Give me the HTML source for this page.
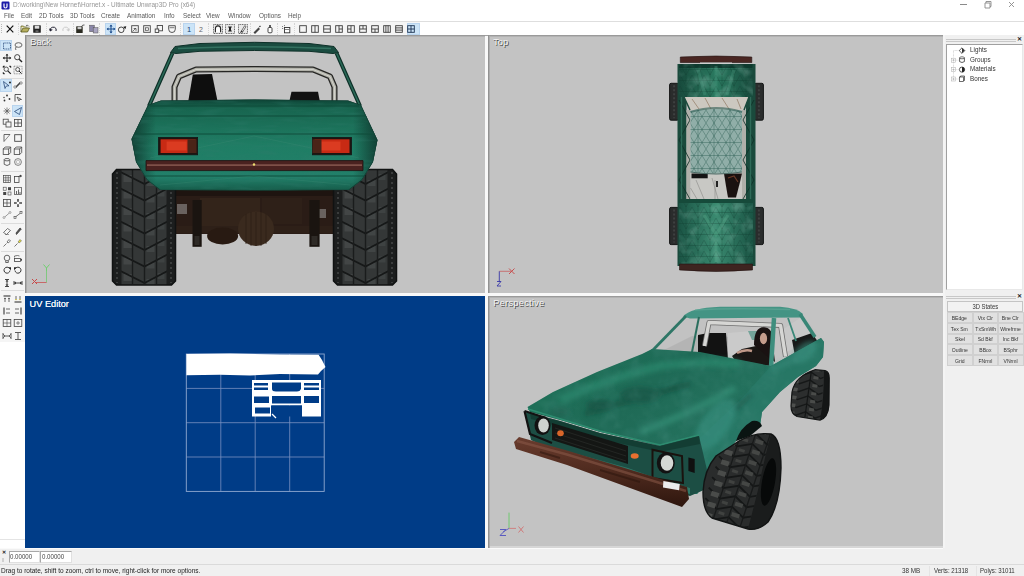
<!DOCTYPE html>
<html><head><meta charset="utf-8">
<style>
*{margin:0;padding:0;box-sizing:border-box}
html,body{width:1024px;height:576px;overflow:hidden;background:#f0f0f0;font-family:"Liberation Sans",sans-serif;position:relative}
.a{position:absolute}
.t{position:absolute;white-space:nowrap}
svg{overflow:visible}
</style></head><body>

<div class="a" style="left:0px;top:0px;width:1024px;height:22px;background:#ffffff;"></div>
<svg class="a" style="left:1px;top:1px;" width="9" height="9" viewBox="0 0 9 9"><rect x="0.5" y="0.5" width="8" height="8" rx="1.2" fill="#1c1ca8"/><path d="M3 2.5v3a1.5 1.5 0 0 0 3 0v-3" stroke="#fff" stroke-width="1.2" fill="none"/></svg>
<div class="t" style="left:12.5px;top:1.2px;font-size:7px;line-height:8.05px;color:#959595;transform:scaleX(0.92);transform-origin:0 0;">D:\working\New Hornet\Hornet.x - Ultimate Unwrap3D Pro (x64)</div>
<svg class="a" style="left:958px;top:0px;" width="66" height="10" viewBox="0 0 66 10"><path d="M2 4.5h7" stroke="#8a8a8a" stroke-width="1"/><path d="M27 3h5v5h-5z M28 3v-1.5h5v5h-1" stroke="#8a8a8a" stroke-width="0.9" fill="none"/><path d="M51 2l5 5M56 2l-5 5" stroke="#8a8a8a" stroke-width="0.9"/></svg>
<div class="t" style="left:4px;top:12.2px;font-size:7.4px;line-height:8.51px;color:#585858;transform:scaleX(0.86);transform-origin:0 0;">File</div>
<div class="t" style="left:21px;top:12.2px;font-size:7.4px;line-height:8.51px;color:#585858;transform:scaleX(0.86);transform-origin:0 0;">Edit</div>
<div class="t" style="left:39px;top:12.2px;font-size:7.4px;line-height:8.51px;color:#585858;transform:scaleX(0.86);transform-origin:0 0;">2D Tools</div>
<div class="t" style="left:69.5px;top:12.2px;font-size:7.4px;line-height:8.51px;color:#585858;transform:scaleX(0.86);transform-origin:0 0;">3D Tools</div>
<div class="t" style="left:100.8px;top:12.2px;font-size:7.4px;line-height:8.51px;color:#585858;transform:scaleX(0.86);transform-origin:0 0;">Create</div>
<div class="t" style="left:126.5px;top:12.2px;font-size:7.4px;line-height:8.51px;color:#585858;transform:scaleX(0.86);transform-origin:0 0;">Animation</div>
<div class="t" style="left:164px;top:12.2px;font-size:7.4px;line-height:8.51px;color:#585858;transform:scaleX(0.86);transform-origin:0 0;">Info</div>
<div class="t" style="left:182.8px;top:12.2px;font-size:7.4px;line-height:8.51px;color:#585858;transform:scaleX(0.86);transform-origin:0 0;">Select</div>
<div class="t" style="left:206px;top:12.2px;font-size:7.4px;line-height:8.51px;color:#585858;transform:scaleX(0.86);transform-origin:0 0;">View</div>
<div class="t" style="left:227.7px;top:12.2px;font-size:7.4px;line-height:8.51px;color:#585858;transform:scaleX(0.86);transform-origin:0 0;">Window</div>
<div class="t" style="left:258.6px;top:12.2px;font-size:7.4px;line-height:8.51px;color:#585858;transform:scaleX(0.86);transform-origin:0 0;">Options</div>
<div class="t" style="left:288px;top:12.2px;font-size:7.4px;line-height:8.51px;color:#585858;transform:scaleX(0.86);transform-origin:0 0;">Help</div>
<div class="a" style="left:0px;top:21px;width:1024px;height:1px;background:#dedede;"></div>
<div class="a" style="left:0px;top:22px;width:420px;height:13px;background:#f5f5f5;"></div>
<div class="a" style="left:420px;top:22px;width:604px;height:13px;background:#ffffff;"></div>
<div class="a" style="left:1px;top:24px;width:1px;height:1px;background:#b8b8b8;"></div>
<div class="a" style="left:1px;top:26px;width:1px;height:1px;background:#b8b8b8;"></div>
<div class="a" style="left:1px;top:28px;width:1px;height:1px;background:#b8b8b8;"></div>
<div class="a" style="left:1px;top:30px;width:1px;height:1px;background:#b8b8b8;"></div>
<div class="a" style="left:1px;top:32px;width:1px;height:1px;background:#b8b8b8;"></div>
<div class="a" style="left:104.8px;top:22.5px;width:11.700000000000003px;height:12.299999999999997px;background:#cce4f7;border:1px solid #b9d4ee"></div>
<div class="a" style="left:183px;top:22.5px;width:11.599999999999994px;height:12.299999999999997px;background:#cce4f7;border:1px solid #b9d4ee"></div>
<div class="a" style="left:407.4px;top:22.5px;width:12.200000000000045px;height:12.299999999999997px;background:#cce4f7;border:1px solid #b9d4ee"></div>
<div class="a" style="left:17.7px;top:22.5px;width:1px;height:12px;border-left:1px dotted #d4d4d4"></div>
<div class="a" style="left:45.5px;top:22.5px;width:1px;height:12px;border-left:1px dotted #d4d4d4"></div>
<div class="a" style="left:72.5px;top:22.5px;width:1px;height:12px;border-left:1px dotted #d4d4d4"></div>
<div class="a" style="left:99.4px;top:22.5px;width:1px;height:12px;border-left:1px dotted #d4d4d4"></div>
<div class="a" style="left:180px;top:22.5px;width:1px;height:12px;border-left:1px dotted #d4d4d4"></div>
<div class="a" style="left:207.5px;top:22.5px;width:1px;height:12px;border-left:1px dotted #d4d4d4"></div>
<div class="a" style="left:250.3px;top:22.5px;width:1px;height:12px;border-left:1px dotted #d4d4d4"></div>
<div class="a" style="left:277.3px;top:22.5px;width:1px;height:12px;border-left:1px dotted #d4d4d4"></div>
<div class="a" style="left:294px;top:22.5px;width:1px;height:12px;border-left:1px dotted #d4d4d4"></div>
<svg class="a" style="left:4.5px;top:23.5px;" width="10" height="10" viewBox="0 0 10 10"><g transform="translate(5 5)"><path d="M-3.3 -3.3L3.3 3.3M3.3 -3.3L-3.3 3.3" stroke="#111" stroke-width="1.2"/></g></svg>
<svg class="a" style="left:20px;top:23.5px;" width="10" height="10" viewBox="0 0 10 10"><g transform="translate(5 5)"><path d="M-4 -1.5v4.5h6.5l2-4h-6.5l-2 4" fill="#b8b060" stroke="#5a5a20" stroke-width="0.8"/><path d="M-4 -1.5v-1.5h2.5l1 1h3" stroke="#5a5a20" fill="#d8d080" stroke-width="0.7"/><path d="M1 -3.5q2 -1 3 1" stroke="#333" stroke-width="0.7" fill="none"/></g></svg>
<svg class="a" style="left:32px;top:23.5px;" width="10" height="10" viewBox="0 0 10 10"><g transform="translate(5 5)"><rect x="-3.8" y="-3.8" width="7.6" height="7.6" rx="0.6" fill="#222"/><rect x="-2.3" y="-3.3" width="4.6" height="3" fill="#ddd"/><rect x="-1.5" y="1.3" width="3" height="2" fill="#666"/></g></svg>
<svg class="a" style="left:47.5px;top:23.5px;" width="10" height="10" viewBox="0 0 10 10"><g transform="translate(5 5)"><path d="M-3 1.5q0.5 -4 4.5 -3.2q2.5 1 1.5 3.7" stroke="#223" stroke-width="1" fill="none"/><path d="M-4 -0.5l1.2 3l2.6 -1.8z" fill="#223"/></g></svg>
<svg class="a" style="left:60.5px;top:23.5px;" width="10" height="10" viewBox="0 0 10 10"><g transform="translate(5 5)"><path d="M3 1.5q-0.5 -4 -4.5 -3.2q-2.5 1 -1.5 3.7" stroke="#ccc" stroke-width="1" fill="none"/><path d="M4 -0.5l-1.2 3l-2.6 -1.8z" fill="#ccc"/></g></svg>
<svg class="a" style="left:75px;top:23.5px;" width="10" height="10" viewBox="0 0 10 10"><g transform="translate(5 5)"><rect x="-3.8" y="-2.8" width="6.5" height="6.8" rx="0.6" fill="#2a2a20"/><rect x="-2.5" y="-2.3" width="4" height="2.5" fill="#ccc"/><path d="M1.5 -2.5q1 -2 3 -1.5" stroke="#333" stroke-width="0.8" fill="none"/></g></svg>
<svg class="a" style="left:88.5px;top:23.5px;" width="10" height="10" viewBox="0 0 10 10"><g transform="translate(5 5)"><rect x="-4.3" y="-3.8" width="4.6" height="6.5" fill="#8a86a8" stroke="#555" stroke-width="0.5"/><rect x="-0.8" y="-1.3" width="4.8" height="5.3" fill="#a8a4c0" stroke="#555" stroke-width="0.5"/></g></svg>
<svg class="a" style="left:105.6px;top:23.5px;" width="10" height="10" viewBox="0 0 10 10"><g transform="translate(5 5)"><path d="M0 -4v8M-4 0h8" stroke="#205090" stroke-width="1.1"/><path d="M0 -4.5l-1.6 2h3.2zM0 4.5l-1.6 -2h3.2zM-4.5 0l2 -1.6v3.2zM4.5 0l-2 -1.6v3.2z" fill="#205090"/></g></svg>
<svg class="a" style="left:117px;top:23.5px;" width="10" height="10" viewBox="0 0 10 10"><g transform="translate(5 5)"><circle cx="-0.8" cy="0.8" r="2.8" stroke="#333" stroke-width="0.9" fill="none"/><path d="M1.3 -2.2l3 -0.5l-1 3z" fill="#111"/></g></svg>
<svg class="a" style="left:129.5px;top:23.5px;" width="10" height="10" viewBox="0 0 10 10"><g transform="translate(5 5)"><rect x="-3.3" y="-3.3" width="6.6" height="6.6" stroke="#444" stroke-width="0.9" fill="none"/><path d="M-1.3 -0.5h2.3v2.3" stroke="#444" stroke-width="0.8" fill="none"/><path d="M-2.5 2.5l3 -3" stroke="#444" stroke-width="0.7"/></g></svg>
<svg class="a" style="left:141.8px;top:23.5px;" width="10" height="10" viewBox="0 0 10 10"><g transform="translate(5 5)"><rect x="-3.3" y="-3.3" width="6.6" height="6.6" stroke="#444" stroke-width="0.9" fill="none"/><rect x="-1.5" y="-1.2" width="3" height="2.5" stroke="#444" stroke-width="0.7" fill="none"/></g></svg>
<svg class="a" style="left:154px;top:23.5px;" width="10" height="10" viewBox="0 0 10 10"><g transform="translate(5 5)"><rect x="-1.8" y="-3.5" width="5.3" height="5.3" stroke="#444" stroke-width="0.9" fill="none"/><rect x="-3.8" y="0" width="3.5" height="3.5" stroke="#444" stroke-width="0.9" fill="#f5f5f5"/></g></svg>
<svg class="a" style="left:166.7px;top:23.5px;" width="10" height="10" viewBox="0 0 10 10"><g transform="translate(5 5)"><path d="M-3.3 -3.3h6.6v3.5q0 3.3 -3.3 3.3q-3.3 0 -3.3 -3.3z" stroke="#444" stroke-width="0.9" fill="none"/><path d="M-2.3 -1.3h4.6" stroke="#444" stroke-width="0.7"/></g></svg>
<svg class="a" style="left:184px;top:23.5px;" width="10" height="10" viewBox="0 0 10 10"><g transform="translate(5 5)"><text x="0" y="2.8" font-size="7.5" text-anchor="middle" fill="#1a3a6a" font-family="Liberation Sans">1</text></g></svg>
<svg class="a" style="left:195.5px;top:23.5px;" width="10" height="10" viewBox="0 0 10 10"><g transform="translate(5 5)"><text x="0" y="2.6" font-size="7" text-anchor="middle" fill="#666" font-family="Liberation Sans">2</text></g></svg>
<svg class="a" style="left:212.5px;top:23.5px;" width="10" height="10" viewBox="0 0 10 10"><g transform="translate(5 5)"><rect x="-4.5" y="-4.5" width="9" height="9" fill="#e8e8e8"/><rect x="-4.5" y="-4.5" width="9" height="9" stroke="#555" stroke-width="0.9" stroke-dasharray="1 0.7" fill="none"/><path d="M-2.6 3.2v-3.5q0 -2.8 2.6 -2.8q2.6 0 2.6 2.8v3.5" stroke="#222" stroke-width="1.1" fill="#fff"/><circle cx="-0.3" cy="1.3" r="1" fill="#fff"/></g></svg>
<svg class="a" style="left:225px;top:23.5px;" width="10" height="10" viewBox="0 0 10 10"><g transform="translate(5 5)"><rect x="-4.5" y="-4.5" width="9" height="9" fill="#e8e8e8"/><rect x="-4.5" y="-4.5" width="9" height="9" stroke="#555" stroke-width="0.9" stroke-dasharray="1 0.7" fill="none"/><path d="M-1.8 -2h3.6M-1.8 2h3.6" stroke="#222" stroke-width="1"/><path d="M-1 -2h2v4h-2z" fill="#222"/></g></svg>
<svg class="a" style="left:237.5px;top:23.5px;" width="10" height="10" viewBox="0 0 10 10"><g transform="translate(5 5)"><rect x="-4.5" y="-4.5" width="9" height="9" fill="#e8e8e8"/><rect x="-4.5" y="-4.5" width="9" height="9" stroke="#555" stroke-width="0.9" stroke-dasharray="1 0.7" fill="none"/><path d="M-2.5 3.5l4.2 -6.8l1.3 0.8l-4.2 6.8z" fill="#fff" stroke="#333" stroke-width="0.7"/><path d="M-2.5 3.5l1.2 -2l1.3 0.8z" fill="#111"/></g></svg>
<svg class="a" style="left:252.39999999999998px;top:23.5px;" width="10" height="10" viewBox="0 0 10 10"><g transform="translate(5 5)"><path d="M-3.5 3.5l5 -5l1.5 1.5l-5 5z" fill="#444"/><path d="M1.5 -1.5l1.5 -2l1 1z" fill="#222"/></g></svg>
<svg class="a" style="left:264.7px;top:23.5px;" width="10" height="10" viewBox="0 0 10 10"><g transform="translate(5 5)"><rect x="-0.8" y="-4" width="1.6" height="2.5" fill="#333"/><rect x="-2" y="-1.5" width="4" height="5.3" rx="1" fill="#fff" stroke="#333" stroke-width="0.9"/></g></svg>
<svg class="a" style="left:281px;top:23.5px;" width="10" height="10" viewBox="0 0 10 10"><g transform="translate(5 5)"><path d="M-4 -3l1 1M-1.5 -4v1.2M-4 -0.5h1.2" stroke="#333" stroke-width="0.6"/><rect x="-1.5" y="-1.5" width="5.3" height="5.3" stroke="#333" stroke-width="0.9" fill="#fff"/><path d="M-1 0.5h4" stroke="#333" stroke-width="0.6"/></g></svg>
<svg class="a" style="left:297.5px;top:23.5px;" width="10" height="10" viewBox="0 0 10 10"><g transform="translate(5 5)"><rect x="-3.3" y="-3.3" width="6.6" height="6.6" stroke="#3a3a3a" stroke-width="0.9" fill="none"/></g></svg>
<svg class="a" style="left:309.6px;top:23.5px;" width="10" height="10" viewBox="0 0 10 10"><g transform="translate(5 5)"><rect x="-3.3" y="-3.3" width="6.6" height="6.6" stroke="#3a3a3a" stroke-width="0.9" fill="none"/><path d="M0 -3.3v6.6" stroke="#3a3a3a" stroke-width="0.9"/></g></svg>
<svg class="a" style="left:321.7px;top:23.5px;" width="10" height="10" viewBox="0 0 10 10"><g transform="translate(5 5)"><rect x="-3.3" y="-3.3" width="6.6" height="6.6" stroke="#3a3a3a" stroke-width="0.9" fill="none"/><path d="M-3.3 0h6.6" stroke="#3a3a3a" stroke-width="0.9"/></g></svg>
<svg class="a" style="left:333.8px;top:23.5px;" width="10" height="10" viewBox="0 0 10 10"><g transform="translate(5 5)"><rect x="-3.3" y="-3.3" width="6.6" height="6.6" stroke="#3a3a3a" stroke-width="0.9" fill="none"/><path d="M0 -3.3v6.6M0 0h3.3" stroke="#3a3a3a" stroke-width="0.9"/></g></svg>
<svg class="a" style="left:345.9px;top:23.5px;" width="10" height="10" viewBox="0 0 10 10"><g transform="translate(5 5)"><rect x="-3.3" y="-3.3" width="6.6" height="6.6" stroke="#3a3a3a" stroke-width="0.9" fill="none"/><path d="M0 -3.3v6.6M0 0h-3.3" stroke="#3a3a3a" stroke-width="0.9"/></g></svg>
<svg class="a" style="left:358.0px;top:23.5px;" width="10" height="10" viewBox="0 0 10 10"><g transform="translate(5 5)"><rect x="-3.3" y="-3.3" width="6.6" height="6.6" stroke="#3a3a3a" stroke-width="0.9" fill="none"/><path d="M-3.3 0h6.6M0 -3.3v3.3" stroke="#3a3a3a" stroke-width="0.9"/></g></svg>
<svg class="a" style="left:370.1px;top:23.5px;" width="10" height="10" viewBox="0 0 10 10"><g transform="translate(5 5)"><rect x="-3.3" y="-3.3" width="6.6" height="6.6" stroke="#3a3a3a" stroke-width="0.9" fill="none"/><path d="M-3.3 0h6.6M0 0v3.3" stroke="#3a3a3a" stroke-width="0.9"/></g></svg>
<svg class="a" style="left:382.2px;top:23.5px;" width="10" height="10" viewBox="0 0 10 10"><g transform="translate(5 5)"><rect x="-3.3" y="-3.3" width="6.6" height="6.6" stroke="#3a3a3a" stroke-width="0.9" fill="none"/><path d="M-1.1 -3.3v6.6M1.1 -3.3v6.6" stroke="#3a3a3a" stroke-width="0.9"/></g></svg>
<svg class="a" style="left:394.3px;top:23.5px;" width="10" height="10" viewBox="0 0 10 10"><g transform="translate(5 5)"><rect x="-3.3" y="-3.3" width="6.6" height="6.6" stroke="#3a3a3a" stroke-width="0.9" fill="none"/><path d="M-3.3 -1.1h6.6M-3.3 1.1h6.6" stroke="#3a3a3a" stroke-width="0.9"/></g></svg>
<svg class="a" style="left:406.4px;top:23.5px;" width="10" height="10" viewBox="0 0 10 10"><g transform="translate(5 5)"><rect x="-3.3" y="-3.3" width="6.6" height="6.6" stroke="#1a3050" stroke-width="0.9" fill="none"/><path d="M0 -3.3v6.6M-3.3 0h6.6" stroke="#1a3050" stroke-width="0.9"/></g></svg>
<div class="a" style="left:0px;top:35px;width:25px;height:307px;background:#f5f5f5;"></div>
<div class="a" style="left:0px;top:342px;width:25px;height:206px;background:#ffffff;"></div>
<div class="a" style="left:0px;top:539px;width:25px;height:1px;background:#e4e4e4;"></div>
<div class="a" style="left:1px;top:77.7px;width:23px;height:1px;background:#dcdcdc;"></div>
<div class="a" style="left:1px;top:130.4px;width:23px;height:1px;background:#dcdcdc;"></div>
<div class="a" style="left:1px;top:170.6px;width:23px;height:1px;background:#dcdcdc;"></div>
<div class="a" style="left:1px;top:223px;width:23px;height:1px;background:#dcdcdc;"></div>
<div class="a" style="left:1px;top:251px;width:23px;height:1px;background:#dcdcdc;"></div>
<div class="a" style="left:1px;top:290.4px;width:23px;height:1px;background:#dcdcdc;"></div>
<div class="a" style="left:0px;top:39.9px;width:12.2px;height:11.300000000000004px;background:#cce4f7;border:1px solid #b9d4ee"></div>
<div class="a" style="left:0px;top:79.3px;width:12.2px;height:12.299999999999997px;background:#cce4f7;border:1px solid #b9d4ee"></div>
<div class="a" style="left:12.2px;top:104.5px;width:11.3px;height:12.0px;background:#cce4f7;border:1px solid #b9d4ee"></div>
<svg class="a" style="left:1.5px;top:40.5px;" width="10" height="10" viewBox="0 0 10 10"><g transform="translate(5 5)"><rect x="-3.5" y="-3" width="7" height="6" stroke="#2a4a7a" stroke-width="0.8" stroke-dasharray="1.2 0.6" fill="none"/></g></svg>
<svg class="a" style="left:13px;top:40.5px;" width="10" height="10" viewBox="0 0 10 10"><g transform="translate(5 5)"><ellipse cx="0.5" cy="-1" rx="3.5" ry="2.3" stroke="#444" stroke-width="0.8" fill="none"/><path d="M-2 1q-1 2 0 3" stroke="#444" stroke-width="0.8" fill="none"/></g></svg>
<svg class="a" style="left:1.5px;top:52.7px;" width="10" height="10" viewBox="0 0 10 10"><g transform="translate(5 5)"><path d="M0 -3.8v7.6M-3.8 0h7.6" stroke="#222" stroke-width="1"/><path d="M0 -4.3l-1.4 1.8h2.8zM0 4.3l-1.4 -1.8h2.8zM-4.3 0l1.8 -1.4v2.8zM4.3 0l-1.8 -1.4v2.8z" fill="#222"/></g></svg>
<svg class="a" style="left:13px;top:52.7px;" width="10" height="10" viewBox="0 0 10 10"><g transform="translate(5 5)"><circle cx="-0.8" cy="-0.8" r="2.6" stroke="#333" stroke-width="0.9" fill="none"/><path d="M1.2 1.2l2.8 2.8" stroke="#222" stroke-width="1.4"/></g></svg>
<svg class="a" style="left:1.5px;top:65.4px;" width="10" height="10" viewBox="0 0 10 10"><g transform="translate(5 5)"><circle cx="-0.8" cy="-0.8" r="2.2" stroke="#333" stroke-width="0.8" fill="none"/><path d="M0.8 0.8l3 3" stroke="#222" stroke-width="1.2"/><path d="M-4 -2v-2h2M4 -2v-2h-2M-4 2v2h2" stroke="#555" stroke-width="0.5"/></g></svg>
<svg class="a" style="left:13px;top:65.4px;" width="10" height="10" viewBox="0 0 10 10"><g transform="translate(5 5)"><rect x="-4" y="-3.8" width="8" height="7.6" stroke="#555" stroke-width="0.6" stroke-dasharray="1 0.6" fill="none"/><circle cx="-0.3" cy="-0.5" r="2" stroke="#333" stroke-width="0.8" fill="none"/><path d="M1 1l2.5 2.5" stroke="#222" stroke-width="1"/></g></svg>
<svg class="a" style="left:1.5px;top:80.4px;" width="10" height="10" viewBox="0 0 10 10"><g transform="translate(5 5)"><path d="M-3.5 -3.5l1.5 7l1.3 -2.5l2.7 -0.2z" stroke="#2a4a7a" stroke-width="0.8" fill="none"/><circle cx="3" cy="-2.5" r="1" fill="#222"/></g></svg>
<svg class="a" style="left:13px;top:80.4px;" width="10" height="10" viewBox="0 0 10 10"><g transform="translate(5 5)"><path d="M-2.5 2.5l5 -5" stroke="#444" stroke-width="1.6"/><circle cx="-3" cy="2" r="1.2" stroke="#444" stroke-width="0.6" fill="#fff"/><circle cx="3" cy="-2" r="1.2" stroke="#444" stroke-width="0.6" fill="#fff"/></g></svg>
<svg class="a" style="left:1.5px;top:92.5px;" width="10" height="10" viewBox="0 0 10 10"><g transform="translate(5 5)"><circle cx="-2.5" cy="2.5" r="0.9" fill="#333"/><circle cx="0" cy="-2.5" r="0.9" fill="#333"/><circle cx="2.5" cy="1" r="0.9" fill="#333"/><circle cx="-3" cy="-0.5" r="0.7" fill="#333"/></g></svg>
<svg class="a" style="left:13px;top:92.5px;" width="10" height="10" viewBox="0 0 10 10"><g transform="translate(5 5)"><path d="M-3 -3.5v7M-3 -3.5h6" stroke="#333" stroke-width="0.8"/><path d="M-1 -1l2 4l0.7 -1.5l1.8 0z" stroke="#333" stroke-width="0.7" fill="none"/></g></svg>
<svg class="a" style="left:1.5px;top:105.5px;" width="10" height="10" viewBox="0 0 10 10"><g transform="translate(5 5)"><path d="M0 -3.5v7M-3.5 0h7M-2.5 -2.5l5 5M2.5 -2.5l-5 5" stroke="#555" stroke-width="0.7"/></g></svg>
<svg class="a" style="left:13px;top:105.5px;" width="10" height="10" viewBox="0 0 10 10"><g transform="translate(5 5)"><path d="M3.5 -3.5l-7 4l5 3z" stroke="#2a4a7a" stroke-width="0.8" fill="none"/></g></svg>
<svg class="a" style="left:1.5px;top:117.7px;" width="10" height="10" viewBox="0 0 10 10"><g transform="translate(5 5)"><rect x="-3.8" y="-3.8" width="5" height="5" stroke="#444" stroke-width="0.8" fill="none"/><rect x="-1" y="-1" width="5" height="5" stroke="#444" stroke-width="0.8" fill="#f5f5f5"/></g></svg>
<svg class="a" style="left:13px;top:117.7px;" width="10" height="10" viewBox="0 0 10 10"><g transform="translate(5 5)"><rect x="-3.5" y="-3.5" width="7" height="7" stroke="#444" stroke-width="0.8" fill="none"/><path d="M0 -3.5v7M-3.5 0h7" stroke="#444" stroke-width="0.8"/></g></svg>
<svg class="a" style="left:1.5px;top:133px;" width="10" height="10" viewBox="0 0 10 10"><g transform="translate(5 5)"><path d="M-3 3.5v-7l6 0" stroke="#444" stroke-width="0.8" fill="none"/><path d="M-3 3.5l6 -7" stroke="#444" stroke-width="0.6"/></g></svg>
<svg class="a" style="left:13px;top:133px;" width="10" height="10" viewBox="0 0 10 10"><g transform="translate(5 5)"><rect x="-3.3" y="-3.3" width="6.6" height="6.6" stroke="#444" stroke-width="0.9" fill="none"/></g></svg>
<svg class="a" style="left:1.5px;top:146px;" width="10" height="10" viewBox="0 0 10 10"><g transform="translate(5 5)"><rect x="-3.8" y="-2" width="5.5" height="5.5" stroke="#444" stroke-width="0.8" fill="none"/><path d="M-3.8 -2l2 -2h5.5v5.5l-2 2M1.7 -2l2 -2" stroke="#444" stroke-width="0.8" fill="none"/></g></svg>
<svg class="a" style="left:13px;top:146px;" width="10" height="10" viewBox="0 0 10 10"><g transform="translate(5 5)"><rect x="-3.8" y="-2" width="5.5" height="5.5" stroke="#444" stroke-width="0.8" fill="none"/><path d="M-3.8 -2l2 -2h5.5v5.5l-2 2M1.7 -2l2 -2" stroke="#444" stroke-width="0.8" fill="none"/></g></svg>
<svg class="a" style="left:1.5px;top:157.4px;" width="10" height="10" viewBox="0 0 10 10"><g transform="translate(5 5)"><ellipse cx="0" cy="-2.3" rx="2.8" ry="1.2" stroke="#444" stroke-width="0.8" fill="none"/><path d="M-2.8 -2.3v4.6q2.8 2.4 5.6 0v-4.6" stroke="#444" stroke-width="0.8" fill="none"/></g></svg>
<svg class="a" style="left:13px;top:157.4px;" width="10" height="10" viewBox="0 0 10 10"><g transform="translate(5 5)"><circle cx="0" cy="0" r="3.4" stroke="#666" stroke-width="0.8" fill="none"/><circle cx="0" cy="0" r="1.8" stroke="#999" stroke-width="0.6" fill="none"/></g></svg>
<svg class="a" style="left:1.5px;top:174px;" width="10" height="10" viewBox="0 0 10 10"><g transform="translate(5 5)"><rect x="-3.5" y="-3.5" width="7" height="7" stroke="#444" stroke-width="0.7" fill="none"/><path d="M-1.2 -3.5v7M1.2 -3.5v7M-3.5 -1.2h7M-3.5 1.2h7" stroke="#444" stroke-width="0.6"/></g></svg>
<svg class="a" style="left:13px;top:174px;" width="10" height="10" viewBox="0 0 10 10"><g transform="translate(5 5)"><rect x="-3.5" y="-2.5" width="4.5" height="6" stroke="#444" stroke-width="0.8" fill="none"/><path d="M0 -2.5l2.5 -1.5v-0.5l1.5 1.5l-1.5 1.5v-0.7z" fill="#333"/></g></svg>
<svg class="a" style="left:1.5px;top:186px;" width="10" height="10" viewBox="0 0 10 10"><g transform="translate(5 5)"><rect x="-3.8" y="-3.8" width="3" height="3" stroke="#444" stroke-width="0.6" fill="none"/><rect x="1" y="-3.8" width="3" height="3" fill="#444"/><rect x="-3.8" y="1" width="3" height="3" fill="#444"/><rect x="1" y="1" width="3" height="3" stroke="#444" stroke-width="0.6" fill="none"/></g></svg>
<svg class="a" style="left:13px;top:186px;" width="10" height="10" viewBox="0 0 10 10"><g transform="translate(5 5)"><rect x="-3.5" y="-3.5" width="7" height="7" stroke="#444" stroke-width="0.7" fill="none"/><path d="M-1.5 3v-3M0.5 3v-4.5M2 3v-2" stroke="#444" stroke-width="0.8"/></g></svg>
<svg class="a" style="left:1.5px;top:198.3px;" width="10" height="10" viewBox="0 0 10 10"><g transform="translate(5 5)"><rect x="-3.5" y="-3.5" width="7" height="7" stroke="#444" stroke-width="0.8" fill="none"/><path d="M0 -3.5v7M-3.5 0h7" stroke="#444" stroke-width="0.7"/></g></svg>
<svg class="a" style="left:13px;top:198.3px;" width="10" height="10" viewBox="0 0 10 10"><g transform="translate(5 5)"><path d="M0 -4v8M-4 0h8" stroke="#444" stroke-width="1.6"/><path d="M-1.2 -1.2h2.4v2.4h-2.4z" fill="#fff"/></g></svg>
<svg class="a" style="left:1.5px;top:210.4px;" width="10" height="10" viewBox="0 0 10 10"><g transform="translate(5 5)"><circle cx="-3" cy="2.5" r="1" stroke="#777" stroke-width="0.6" fill="none"/><circle cx="3" cy="-2.5" r="1" stroke="#777" stroke-width="0.6" fill="none"/><path d="M-2 1.8l4 -3.5" stroke="#777" stroke-width="0.7"/></g></svg>
<svg class="a" style="left:13px;top:210.4px;" width="10" height="10" viewBox="0 0 10 10"><g transform="translate(5 5)"><rect x="-4" y="1.5" width="2" height="2" stroke="#444" stroke-width="0.6" fill="none"/><rect x="2" y="-3.5" width="2" height="2" stroke="#444" stroke-width="0.6" fill="none"/><path d="M-2 1.5l4 -3" stroke="#444" stroke-width="0.7"/></g></svg>
<svg class="a" style="left:1.5px;top:225.8px;" width="10" height="10" viewBox="0 0 10 10"><g transform="translate(5 5)"><path d="M-3.5 1.5l4 -4l3 2l-4 4z" stroke="#444" stroke-width="0.7" fill="none"/><path d="M-2 3.5h4" stroke="#444" stroke-width="0.5"/></g></svg>
<svg class="a" style="left:13px;top:225.8px;" width="10" height="10" viewBox="0 0 10 10"><g transform="translate(5 5)"><path d="M-1.5 3.5l-0.5 -1.5l4 -5l1.3 1z" stroke="#333" stroke-width="0.7" fill="#555"/></g></svg>
<svg class="a" style="left:1.5px;top:237.6px;" width="10" height="10" viewBox="0 0 10 10"><g transform="translate(5 5)"><path d="M-3.5 3.5l3 -3" stroke="#444" stroke-width="0.7"/><path d="M0 -1l2 -2.5l1.5 1.5l-2.5 2z" stroke="#444" stroke-width="0.7" fill="#fff"/></g></svg>
<svg class="a" style="left:13px;top:237.6px;" width="10" height="10" viewBox="0 0 10 10"><g transform="translate(5 5)"><path d="M-3.5 3.5l3 -3" stroke="#444" stroke-width="0.7"/><path d="M0 -1l2 -2.5l1.5 1.5l-2.5 2z" stroke="#666" stroke-width="0.6" fill="#e8e030"/></g></svg>
<svg class="a" style="left:1.5px;top:253.60000000000002px;" width="10" height="10" viewBox="0 0 10 10"><g transform="translate(5 5)"><circle cx="0" cy="-1" r="2.8" stroke="#444" stroke-width="0.8" fill="none"/><path d="M-1.3 2v1.5h2.6v-1.5" stroke="#444" stroke-width="0.8" fill="none"/></g></svg>
<svg class="a" style="left:13px;top:253.60000000000002px;" width="10" height="10" viewBox="0 0 10 10"><g transform="translate(5 5)"><path d="M-3.5 -1.5v-1.5q3.5 -1 5 0" stroke="#444" stroke-width="0.7" fill="none"/><rect x="-3.5" y="-0.5" width="6" height="3" stroke="#444" stroke-width="0.8" fill="none"/><path d="M2.5 0.5l1.5 -1v3z" fill="#444"/></g></svg>
<svg class="a" style="left:1.5px;top:265.4px;" width="10" height="10" viewBox="0 0 10 10"><g transform="translate(5 5)"><path d="M2.5 -1.5a3 3 0 1 0 0.5 2" stroke="#333" stroke-width="1" fill="none"/><path d="M1 -2.8h3v3z" fill="#222"/></g></svg>
<svg class="a" style="left:13px;top:265.4px;" width="10" height="10" viewBox="0 0 10 10"><g transform="translate(5 5)"><path d="M-2.5 -1.5a3 3 0 1 1 -0.5 2" stroke="#333" stroke-width="1" fill="none"/><path d="M-1 -2.8h-3v3z" fill="#222"/></g></svg>
<svg class="a" style="left:1.5px;top:277.6px;" width="10" height="10" viewBox="0 0 10 10"><g transform="translate(5 5)"><path d="M-2 -3.5h4M-2 3.5h4M0 -3.5v7" stroke="#333" stroke-width="0.9"/><path d="M0 -3l-1.5 1.5h3zM0 3l-1.5 -1.5h3z" fill="#333"/></g></svg>
<svg class="a" style="left:13px;top:277.6px;" width="10" height="10" viewBox="0 0 10 10"><g transform="translate(5 5)"><path d="M-4 -2v4M4 -2v4M-4 0h8" stroke="#333" stroke-width="0.9"/><path d="M-3.5 0l1.5 -1.5v3zM3.5 0l-1.5 -1.5v3z" fill="#333"/></g></svg>
<svg class="a" style="left:1.5px;top:293.5px;" width="10" height="10" viewBox="0 0 10 10"><g transform="translate(5 5)"><path d="M-3.5 -3.5h7M-3.5 -2.5h7" stroke="#444" stroke-width="0.6"/><path d="M-2 -1v4M2 -1v4" stroke="#444" stroke-width="0.8"/><path d="M-2 -1.5l-1 1.5h2zM2 -1.5l-1 1.5h2z" fill="#444"/></g></svg>
<svg class="a" style="left:13px;top:293.5px;" width="10" height="10" viewBox="0 0 10 10"><g transform="translate(5 5)"><path d="M-3.5 3.5h7M-3.5 2.5h7" stroke="#444" stroke-width="0.6"/><path d="M-2 -3v4M2 -3v4" stroke="#444" stroke-width="0.8"/><path d="M-2 1.5l-1 -1.5h2zM2 1.5l-1 -1.5h2z" fill="#e0d040"/></g></svg>
<svg class="a" style="left:1.5px;top:306px;" width="10" height="10" viewBox="0 0 10 10"><g transform="translate(5 5)"><path d="M-3.5 -3.5v7M-2.5 -3.5v7" stroke="#444" stroke-width="0.6"/><path d="M-1 -2h4M-1 2h4" stroke="#444" stroke-width="0.8"/></g></svg>
<svg class="a" style="left:13px;top:306px;" width="10" height="10" viewBox="0 0 10 10"><g transform="translate(5 5)"><path d="M3.5 -3.5v7M2.5 -3.5v7" stroke="#444" stroke-width="0.6"/><path d="M-3 -2h4M-3 2h4" stroke="#444" stroke-width="0.8"/></g></svg>
<svg class="a" style="left:1.5px;top:317.7px;" width="10" height="10" viewBox="0 0 10 10"><g transform="translate(5 5)"><rect x="-3.8" y="-3.5" width="7.6" height="7" stroke="#444" stroke-width="0.8" fill="none"/><path d="M0 -3.5v7M-3.8 0h7.6" stroke="#444" stroke-width="0.6"/></g></svg>
<svg class="a" style="left:13px;top:317.7px;" width="10" height="10" viewBox="0 0 10 10"><g transform="translate(5 5)"><rect x="-3.8" y="-3.5" width="7.6" height="7" stroke="#444" stroke-width="0.8" fill="none"/><path d="M-2 0h4M0 -2v4" stroke="#444" stroke-width="0.6"/></g></svg>
<svg class="a" style="left:1.5px;top:330.6px;" width="10" height="10" viewBox="0 0 10 10"><g transform="translate(5 5)"><path d="M-4 -3v6M4 -3v6M-3 0h6" stroke="#333" stroke-width="0.8"/><path d="M-4 -2l2 2l-2 2M4 -2l-2 2l2 2" stroke="#333" stroke-width="0.6" fill="none"/></g></svg>
<svg class="a" style="left:13px;top:330.6px;" width="10" height="10" viewBox="0 0 10 10"><g transform="translate(5 5)"><path d="M-3 -3.5h6M-3 3.5h6M0 -3v6" stroke="#333" stroke-width="0.8"/></g></svg>
<div class="a" style="left:25px;top:35px;width:918px;height:513px;background:#f8f8f8;"></div>
<div class="a" style="left:25px;top:35px;width:918px;height:1px;background:#a0a0a0;"></div>
<div class="a" style="left:25px;top:35px;width:460px;height:257.5px;background:#c3c3c3;overflow:hidden">
<svg style="position:absolute;left:0;top:0" width="460" height="258" viewBox="25 35 460 258"><defs><pattern id="tread" width="21" height="11" patternUnits="userSpaceOnUse" x="1" y="2">
<rect width="21" height="11" fill="#353836"/>
<rect x="1" y="0.5" width="7" height="5" fill="#5e605c" opacity="0.55"/><rect x="12" y="5" width="7" height="5" fill="#555854" opacity="0.5"/>
<path d="M0 2l5.25 5l5.25 -5l5.25 5l5.25 -5" stroke="#161818" stroke-width="1.5" fill="none"/>
<path d="M5.25 0V11M15.75 0V11" stroke="#1a1c1c" stroke-width="1"/>
</pattern>
<linearGradient id="tireedge" x1="0" y1="0" x2="1" y2="0">
<stop offset="0" stop-color="#0c0e0e" stop-opacity="0.9"/><stop offset="0.16" stop-color="#0c0e0e" stop-opacity="0.1"/><stop offset="0.84" stop-color="#0c0e0e" stop-opacity="0.1"/><stop offset="1" stop-color="#0c0e0e" stop-opacity="0.9"/></linearGradient>
<pattern id="tread2" width="10" height="10" patternUnits="userSpaceOnUse" patternTransform="rotate(20)">
<rect width="10" height="10" fill="#303230"/>
<rect x="1" y="1" width="4" height="3" fill="#585a56" opacity="0.6"/><rect x="6" y="6" width="3" height="3" fill="#4e504c" opacity="0.6"/>
<path d="M0 2l2.5 3l2.5 -3l2.5 3l2.5 -3" stroke="#141616" stroke-width="1.2" fill="none"/>
<path d="M0 7l2.5 2l2.5 -2l2.5 2l2.5 -2" stroke="#181a1a" stroke-width="0.9" fill="none"/>
</pattern>
<linearGradient id="bodyg" x1="0" y1="0" x2="0" y2="1">
<stop offset="0" stop-color="#0e4436"/><stop offset="0.1" stop-color="#18654f"/><stop offset="0.5" stop-color="#1f7d64"/><stop offset="0.85" stop-color="#22806a"/><stop offset="1" stop-color="#165c4a"/></linearGradient>
<linearGradient id="bodyh" x1="0" y1="0" x2="1" y2="0">
<stop offset="0" stop-color="#0e3028" stop-opacity="0.8"/><stop offset="0.1" stop-color="#0e3028" stop-opacity="0"/><stop offset="0.9" stop-color="#0e3028" stop-opacity="0"/><stop offset="1" stop-color="#0e3028" stop-opacity="0.8"/></linearGradient>
<linearGradient id="underg" x1="0" y1="0" x2="0" y2="1"><stop offset="0" stop-color="#1e1612"/><stop offset="1" stop-color="#3a2a1e"/></linearGradient>
<filter id="noiseB" x="0" y="0" width="100%" height="100%"><feTurbulence type="fractalNoise" baseFrequency="0.04 0.25" numOctaves="2" seed="3"/><feColorMatrix values="0 0 0 0 0.03  0 0 0 0 0.2  0 0 0 0 0.15  0 0 0 2 -0.9"/><feComposite in2="SourceGraphic" operator="in"/></filter>
</defs><rect x="167.4" y="186" width="174.4" height="48" fill="#2a1c16"/><rect x="167.4" y="188" width="174.4" height="8" fill="#1e1410"/><rect x="200" y="198" width="60" height="30" fill="#33241a"/><rect x="262" y="198" width="40" height="26" fill="#2e2018"/><path d="M177 204 h10 v10 h-10z M310 209 h16 v9 h-16z" fill="#a8a8a8" opacity="0.5"/><rect x="175" y="226" width="160" height="7" fill="#2e2018"/><ellipse cx="222.6" cy="236" rx="15.5" ry="8.5" fill="#281a12"/><ellipse cx="256" cy="228.7" rx="18" ry="17.2" fill="#3a2a1e"/><path d="M246 214 V244 M251 212 V246 M256 212 V246 M261 212 V246 M266 214 V244" stroke="#2a1c14" stroke-width="1" opacity="0.7"/><rect x="192.5" y="200" width="9.2" height="46.8" fill="#1a1410"/><rect x="309.4" y="200" width="10.2" height="46.8" fill="#1a1410"/><rect x="194.5" y="236" width="5" height="9" fill="#2e2a26"/><rect x="311.5" y="236" width="6" height="9" fill="#2e2a26"/><clipPath id="wc112"><path d="M116.5 169.5 H171.5 L175.5 174 V281 L171.5 285 H116.5 L112.5 281 V174 Z"/></clipPath><g clip-path="url(#wc112)"><path d="M116.5 169.5 H171.5 L175.5 174 V281 L171.5 285 H116.5 L112.5 281 V174 Z" fill="#343737"/><g opacity="0.7"><rect x="123.5" y="175.0" width="9" height="7" fill="#4a4e4e"/><rect x="146.5" y="180.0" width="8" height="6" fill="#484c4c"/><rect x="157.5" y="174.0" width="7" height="6" fill="#444848"/><rect x="123.5" y="191.5" width="9" height="7" fill="#4a4e4e"/><rect x="146.5" y="196.5" width="8" height="6" fill="#484c4c"/><rect x="157.5" y="190.5" width="7" height="6" fill="#444848"/><rect x="123.5" y="208.0" width="9" height="7" fill="#4a4e4e"/><rect x="146.5" y="213.0" width="8" height="6" fill="#484c4c"/><rect x="157.5" y="207.0" width="7" height="6" fill="#444848"/><rect x="123.5" y="224.5" width="9" height="7" fill="#4a4e4e"/><rect x="146.5" y="229.5" width="8" height="6" fill="#484c4c"/><rect x="157.5" y="223.5" width="7" height="6" fill="#444848"/><rect x="123.5" y="241.0" width="9" height="7" fill="#4a4e4e"/><rect x="146.5" y="246.0" width="8" height="6" fill="#484c4c"/><rect x="157.5" y="240.0" width="7" height="6" fill="#444848"/><rect x="123.5" y="257.5" width="9" height="7" fill="#4a4e4e"/><rect x="146.5" y="262.5" width="8" height="6" fill="#484c4c"/><rect x="157.5" y="256.5" width="7" height="6" fill="#444848"/><rect x="123.5" y="274.0" width="9" height="7" fill="#4a4e4e"/><rect x="146.5" y="279.0" width="8" height="6" fill="#484c4c"/><rect x="157.5" y="273.0" width="7" height="6" fill="#444848"/></g><path d="M120.5 155.5 L144.5 167.5 L167.5 155.5 M120.5 172.0 L144.5 184.0 L167.5 172.0 M120.5 188.5 L144.5 200.5 L167.5 188.5 M120.5 205.0 L144.5 217.0 L167.5 205.0 M120.5 221.5 L144.5 233.5 L167.5 221.5 M120.5 238.0 L144.5 250.0 L167.5 238.0 M120.5 254.5 L144.5 266.5 L167.5 254.5 M120.5 271.0 L144.5 283.0 L167.5 271.0 M120.5 287.5 L144.5 299.5 L167.5 287.5" stroke="#161818" stroke-width="1.8" fill="none"/><path d="M132.5 170 V284 M144.5 170 V284 M156.5 170 V284" stroke="#1a1c1c" stroke-width="1.4"/><rect x="112.5" y="170" width="9" height="115" fill="#1c1e1e"/><rect x="166.5" y="170" width="9" height="115" fill="#1c1e1e"/><path d="M117.0 172 V283 M171.0 172 V283" stroke="#3a3c3c" stroke-width="2" stroke-dasharray="2 3"/></g><path d="M116.5 169.5 H171.5 L175.5 174 V281 L171.5 285 H116.5 L112.5 281 V174 Z" fill="none" stroke="#101212" stroke-width="1.5"/><clipPath id="wc333"><path d="M337.5 169.5 H392.5 L396.5 174 V281 L392.5 285 H337.5 L333.5 281 V174 Z"/></clipPath><g clip-path="url(#wc333)"><path d="M337.5 169.5 H392.5 L396.5 174 V281 L392.5 285 H337.5 L333.5 281 V174 Z" fill="#343737"/><g opacity="0.7"><rect x="344.5" y="175.0" width="9" height="7" fill="#4a4e4e"/><rect x="367.5" y="180.0" width="8" height="6" fill="#484c4c"/><rect x="378.5" y="174.0" width="7" height="6" fill="#444848"/><rect x="344.5" y="191.5" width="9" height="7" fill="#4a4e4e"/><rect x="367.5" y="196.5" width="8" height="6" fill="#484c4c"/><rect x="378.5" y="190.5" width="7" height="6" fill="#444848"/><rect x="344.5" y="208.0" width="9" height="7" fill="#4a4e4e"/><rect x="367.5" y="213.0" width="8" height="6" fill="#484c4c"/><rect x="378.5" y="207.0" width="7" height="6" fill="#444848"/><rect x="344.5" y="224.5" width="9" height="7" fill="#4a4e4e"/><rect x="367.5" y="229.5" width="8" height="6" fill="#484c4c"/><rect x="378.5" y="223.5" width="7" height="6" fill="#444848"/><rect x="344.5" y="241.0" width="9" height="7" fill="#4a4e4e"/><rect x="367.5" y="246.0" width="8" height="6" fill="#484c4c"/><rect x="378.5" y="240.0" width="7" height="6" fill="#444848"/><rect x="344.5" y="257.5" width="9" height="7" fill="#4a4e4e"/><rect x="367.5" y="262.5" width="8" height="6" fill="#484c4c"/><rect x="378.5" y="256.5" width="7" height="6" fill="#444848"/><rect x="344.5" y="274.0" width="9" height="7" fill="#4a4e4e"/><rect x="367.5" y="279.0" width="8" height="6" fill="#484c4c"/><rect x="378.5" y="273.0" width="7" height="6" fill="#444848"/></g><path d="M341.5 155.5 L365.5 167.5 L388.5 155.5 M341.5 172.0 L365.5 184.0 L388.5 172.0 M341.5 188.5 L365.5 200.5 L388.5 188.5 M341.5 205.0 L365.5 217.0 L388.5 205.0 M341.5 221.5 L365.5 233.5 L388.5 221.5 M341.5 238.0 L365.5 250.0 L388.5 238.0 M341.5 254.5 L365.5 266.5 L388.5 254.5 M341.5 271.0 L365.5 283.0 L388.5 271.0 M341.5 287.5 L365.5 299.5 L388.5 287.5" stroke="#161818" stroke-width="1.8" fill="none"/><path d="M353.5 170 V284 M365.5 170 V284 M377.5 170 V284" stroke="#1a1c1c" stroke-width="1.4"/><rect x="333.5" y="170" width="9" height="115" fill="#1c1e1e"/><rect x="387.5" y="170" width="9" height="115" fill="#1c1e1e"/><path d="M338.0 172 V283 M392.0 172 V283" stroke="#3a3c3c" stroke-width="2" stroke-dasharray="2 3"/></g><path d="M337.5 169.5 H392.5 L396.5 174 V281 L392.5 285 H337.5 L333.5 281 V174 Z" fill="none" stroke="#101212" stroke-width="1.5"/><path d="M149.0 106.0 L172.5 53.0 M360.0 106.0 L336.5 53.0" stroke="#0e3028" stroke-width="4" fill="none"/><path d="M149.0 106.0 L172.5 53.0 M360.0 106.0 L336.5 53.0" stroke="#2a6a58" stroke-width="1.6" fill="none"/><path d="M170.5 52.5 L175.0 46.5 L200.0 43.5 L254.5 42.3 L254.5 42.3 L309.0 43.5 L334.0 46.5 L338.5 52.5 L333.0 53.5 L309.0 51.3 L254.5 50.5 L254.5 50.5 L200.0 51.3 L176.0 53.5 Z" fill="#1a4c40" stroke="#0e3028" stroke-width="1"/><path d="M178 48.5 Q254.5 45 331 48.5" stroke="#3a7a68" stroke-width="1.4" fill="none" opacity="0.8"/><path d="M174.5 101.0 L174.5 87.0 L179.0 76.5 L196.0 69.5 L254.5 69.0 L254.5 69.0 L313.0 69.5 L330.0 76.5 L334.5 87.0 L334.5 101.0" stroke="#262624" stroke-width="6" fill="none" stroke-linejoin="round"/><path d="M174.5 101.0 L174.5 87.0 L179.0 76.5 L196.0 69.5 L254.5 69.0 L254.5 69.0 L313.0 69.5 L330.0 76.5 L334.5 87.0 L334.5 101.0" stroke="#b0b0a8" stroke-width="3.4" fill="none" stroke-linejoin="round"/><path d="M174.5 101.0 L174.5 87.0 L179.0 76.5 L196.0 69.5 L254.5 69.0 L254.5 69.0 L313.0 69.5 L330.0 76.5 L334.5 87.0 L334.5 101.0" stroke="#e0e0d8" stroke-width="1" fill="none" stroke-linejoin="round" opacity="0.7"/><path d="M188.3 101 L192.8 74.5 L212 74 L217.5 101 Z" fill="#0e0e0e"/><path d="M289.4 101 L291.5 91.8 L318 91.8 L319.8 101 Z" fill="#121212"/><path d="M148.0 105.0 L161.0 100.5 L254.5 99.5 L254.5 99.5 L348.0 100.5 L361.0 105.0 L377.5 140.0 L373.0 162.0 L362.0 180.0 L349.0 190.0 L254.5 190.5 L160.0 190.0 L147.0 180.0 L136.0 162.0 L131.5 139.0 Z" fill="url(#bodyg)"/><path d="M148.0 105.0 L161.0 100.5 L254.5 99.5 L254.5 99.5 L348.0 100.5 L361.0 105.0 L377.5 140.0 L373.0 162.0 L362.0 180.0 L349.0 190.0 L254.5 190.5 L160.0 190.0 L147.0 180.0 L136.0 162.0 L131.5 139.0 Z" fill="url(#bodyh)"/><path d="M148.0 105.0 L161.0 100.5 L254.5 99.5 L254.5 99.5 L348.0 100.5 L361.0 105.0 L377.5 140.0 L373.0 162.0 L362.0 180.0 L349.0 190.0 L254.5 190.5 L160.0 190.0 L147.0 180.0 L136.0 162.0 L131.5 139.0 Z" fill="#000" filter="url(#noiseB)" opacity="0.4"/><clipPath id="bodyclip"><path d="M148.0 105.0 L161.0 100.5 L254.5 99.5 L254.5 99.5 L348.0 100.5 L361.0 105.0 L377.5 140.0 L373.0 162.0 L362.0 180.0 L349.0 190.0 L254.5 190.5 L160.0 190.0 L147.0 180.0 L136.0 162.0 L131.5 139.0 Z"/></clipPath><g clip-path="url(#bodyclip)"><path d="M148.0 105.0 L161.0 100.5 L254.5 99.5 L254.5 99.5 L348.0 100.5 L361.0 105.0 L377.5 140.0 L373.0 162.0 L362.0 180.0 L349.0 190.0 L254.5 190.5 L160.0 190.0 L147.0 180.0 L136.0 162.0 L131.5 139.0 Z" fill="none" stroke="#123a30" stroke-width="1.2"/><path d="M150 106 L359 106 M140 116 L369 116 M135 134 L374 134 M142 176 L367 176" stroke="#0e4a38" stroke-width="1.2" fill="none" opacity="0.9"/><path d="M150 158 L254 136 L359 158 M160 185 L254 176 L350 185" stroke="#3a8a72" stroke-width="0.6" fill="none" opacity="0.6"/></g><rect x="158.6" y="137.5" width="39" height="17.3" fill="#1e1410" stroke="#141414" stroke-width="0.8"/><rect x="160.6" y="139.3" width="35" height="13.7" fill="#c82a14"/><rect x="166.6" y="141.5" width="20" height="9" fill="#e8482a" opacity="0.6"/><rect x="312.5" y="137.5" width="39" height="17.3" fill="#1e1410" stroke="#141414" stroke-width="0.8"/><rect x="314.5" y="139.3" width="35" height="13.7" fill="#c82a14"/><rect x="320.5" y="141.5" width="20" height="9" fill="#e8482a" opacity="0.6"/><rect x="312.5" y="139.3" width="9" height="13.7" fill="#4a2418"/><rect x="187.5" y="139.3" width="9" height="13.7" fill="#4a2418"/><path d="M146 160.6 L363 160.6 L363 170.6 L146 170.6 Z" fill="#4a2220" stroke="#201010" stroke-width="0.8"/><path d="M147 165.2 L362 165.2" stroke="#7e5048" stroke-width="1.8"/><circle cx="254" cy="164.5" r="1.2" fill="#f0e070"/><path d="M46.5 270 V282.5" stroke="#70c870" stroke-width="0.8"/><path d="M46.5 282.5 H36" stroke="#c85050" stroke-width="0.8"/><path d="M43.5 264.5 L46.5 268 L49.5 264.5 M46.5 268 V271" stroke="#70d070" stroke-width="1" fill="none"/><path d="M32 279 L37 284 M37 279 L32 284" stroke="#c84848" stroke-width="1"/></svg><div class="t" style="left:5.2px;top:2px;font-size:9.3px;line-height:10px;color:#f2f2f2;text-shadow:0.9px 0.5px 0.2px #4a4a4a">Back</div>
</div>
<div class="a" style="left:25px;top:35px;width:460px;height:1px;background:#9a9a9a;"></div>
<div class="a" style="left:25px;top:36px;width:460px;height:1px;background:#b2b2b2;"></div>
<div class="a" style="left:25px;top:35px;width:1px;height:257.5px;background:#929292;"></div>
<div class="a" style="left:26px;top:36px;width:1px;height:256.5px;background:#acacac;"></div>
<div class="a" style="left:488px;top:35px;width:455px;height:257.5px;background:#c3c3c3;overflow:hidden">
<svg style="position:absolute;left:0;top:0" width="455" height="258" viewBox="488 35 455 258"><defs>
<pattern id="wire" width="16" height="13" patternUnits="userSpaceOnUse" x="690" y="110"><path d="M0 0L8 13L16 0M0 13L8 0L16 13M8 0V13M0 6.5H16" stroke="#2a5a50" stroke-width="0.55" fill="none" opacity="0.75"/></pattern>
<pattern id="wire2" width="12" height="11" patternUnits="userSpaceOnUse" x="680" y="64"><path d="M0 0L6 11L12 0M6 0V11M0 5.5H12" stroke="#0e3a2c" stroke-width="0.6" fill="none" opacity="0.45"/></pattern>
<linearGradient id="hoodt" x1="0" y1="0" x2="1" y2="0"><stop offset="0" stop-color="#174a3c"/><stop offset="0.5" stop-color="#2a7a60"/><stop offset="1" stop-color="#174a3c"/></linearGradient>
<filter id="noiseT" x="0" y="0" width="100%" height="100%"><feTurbulence type="fractalNoise" baseFrequency="0.09" numOctaves="2" seed="5"/><feColorMatrix values="0 0 0 0 0.35  0 0 0 0 0.65  0 0 0 0 0.55  0 0 0 2.2 -1.0"/><feComposite in2="SourceGraphic" operator="in"/></filter>
<linearGradient id="trunkt" x1="0" y1="0" x2="1" y2="0"><stop offset="0" stop-color="#1a5444"/><stop offset="0.5" stop-color="#3a8a70"/><stop offset="1" stop-color="#1a5444"/></linearGradient>
</defs><rect x="669.6" y="83.3" width="9" height="36.9" rx="1.5" fill="#2a2c2c" stroke="#141616" stroke-width="1"/><path d="M674.1 85.3 V118.2" stroke="#3e4040" stroke-width="2" stroke-dasharray="2 2"/><rect x="669.6" y="207.4" width="9" height="37.2" rx="1.5" fill="#2a2c2c" stroke="#141616" stroke-width="1"/><path d="M674.1 209.4 V242.6" stroke="#3e4040" stroke-width="2" stroke-dasharray="2 2"/><rect x="754.4" y="83.3" width="9" height="36.9" rx="1.5" fill="#2a2c2c" stroke="#141616" stroke-width="1"/><path d="M758.9 85.3 V118.2" stroke="#3e4040" stroke-width="2" stroke-dasharray="2 2"/><rect x="754.4" y="207.4" width="9" height="37.2" rx="1.5" fill="#2a2c2c" stroke="#141616" stroke-width="1"/><path d="M758.9 209.4 V242.6" stroke="#3e4040" stroke-width="2" stroke-dasharray="2 2"/><path d="M677.5 64 H686.5 V266 H677.5 Z M746 64 H755.5 V266 H746 Z" fill="#1a4a3c"/><path d="M686.5 110 H690.5 V199 H686.5 Z M742 110 H746 V199 H742 Z" fill="#b0b0aa"/><path d="M679 100 L690 120 L679 140 L690 160 L679 180 L690 199 M754 100 L743 120 L754 140 L743 160 L754 180 L743 199" stroke="#0e2e26" stroke-width="0.8" fill="none"/><path d="M681.5 64 V266 M750.5 64 V266" stroke="#2e6a58" stroke-width="1.4"/><path d="M679 64 L752.5 64 L753 97 L679 97 Z" fill="url(#hoodt)"/><path d="M679 64 L752.5 64 L753 97 L679 97 Z" fill="url(#wire2)"/><path d="M679 64 H752.5 V68 H679Z" fill="#0e3a2e"/><path d="M698 70 L705 95 M716 66 V96 M734 70 L727 95" stroke="#4a9a80" stroke-width="3" opacity="0.35"/><path d="M684 97 L749 97 L744 110 L690 110 Z" fill="#ccc8c0"/><path d="M692 99 L699 109 M705 98 L711 109 M722 98 L729 109 M737 99 L741 109" stroke="#8a7058" stroke-width="0.9" opacity="0.7"/><path d="M684 97 L690 110 M749 97 L744 110" stroke="#1a4a3c" stroke-width="1.5"/><path d="M690.5 172 L742 172 L742 199 L690.5 199 Z" fill="#c8c8c4"/><path d="M691.5 173.5 H707.7 V178.3 H691.5 Z" fill="#141414"/><path d="M724 173.5 H742 L740 182 L736 197.4 H728 L726 186 Z" fill="#1a1210"/><path d="M728 178 L734 176 L738 182" stroke="#6a3a28" stroke-width="1.2" fill="none"/><path d="M696 180 L704 199 M712 178 L718 199 M690.5 188 L697 199 M715 180 V199" stroke="#8a8a86" stroke-width="0.6"/><rect x="716" y="181" width="2" height="6" fill="#222"/><path d="M690.5 111 Q716 107 742 111 L742 172 Q716 175 690.5 172 Z" fill="#90aea8"/><path d="M690.5 111 Q716 107 742 111 L742 172 Q716 175 690.5 172 Z" fill="url(#wire)"/><path d="M690.5 112 Q716 104 742 112" stroke="#2a5a50" stroke-width="2" fill="none" opacity="0.6"/><path d="M690.5 172 Q716 176 742 172" stroke="#4a6a64" stroke-width="1.2" fill="none"/><path d="M679 199 L753 199 L753 264 L679 264 Z" fill="url(#trunkt)"/><path d="M679 199 L753 199 L753 264 L679 264 Z" fill="url(#wire2)"/><path d="M679 199 H753 V203 H679Z" fill="#164a3a"/><path d="M679 64 L752.5 64 L753 97 L679 97 Z M679 203 L753 203 L753 264 L679 264 Z" fill="#000" filter="url(#noiseT)" opacity="0.35"/><path d="M704 215 L716 235 L728 215 M716 240 V262" stroke="#5aaa8a" stroke-width="3" fill="none" opacity="0.35"/><path d="M680.3 57 Q716 55 751.8 57 V62.5 H680.3 Z" fill="#4a2622" stroke="#241210" stroke-width="0.6"/><path d="M679.5 264 H752.5 V270 Q716 273 679.5 270 Z" fill="#3e2420" stroke="#241210" stroke-width="0.6"/><path d="M700 62.5 H732 V64 H700Z" fill="#d0d0d0"/><path d="M499.3 271.3 H511" stroke="#c86060" stroke-width="0.8"/><path d="M509 268.5 L514.5 274 M514.5 268.5 L509 274" stroke="#c85050" stroke-width="1"/><path d="M499.3 271.3 V282" stroke="#3838a8" stroke-width="0.9"/><path d="M497 281.5 H501 L497 286 H501" stroke="#3838a8" stroke-width="0.9" fill="none"/></svg><div class="t" style="left:5.2px;top:2px;font-size:9.3px;line-height:10px;color:#f2f2f2;text-shadow:0.9px 0.5px 0.2px #4a4a4a">Top</div>
</div>
<div class="a" style="left:488px;top:35px;width:455px;height:1px;background:#9a9a9a;"></div>
<div class="a" style="left:488px;top:36px;width:455px;height:1px;background:#b2b2b2;"></div>
<div class="a" style="left:488px;top:35px;width:1px;height:257.5px;background:#929292;"></div>
<div class="a" style="left:489px;top:36px;width:1px;height:256.5px;background:#acacac;"></div>
<div class="a" style="left:25px;top:296px;width:460px;height:252px;background:#003c87;overflow:hidden">
<svg style="position:absolute;left:0;top:0" width="460" height="252" viewBox="25 296 460 252"><defs></defs><path d="M220.8 354 V491.4 M186.3 388.4 H324.2" stroke="#7890c0" stroke-width="0.8"/><path d="M255.2 354 V491.4 M186.3 422.7 H324.2" stroke="#7890c0" stroke-width="0.8"/><path d="M289.7 354 V491.4 M186.3 457.0 H324.2" stroke="#7890c0" stroke-width="0.8"/><rect x="186.3" y="354" width="137.9" height="137.4" fill="none" stroke="#90a8d0" stroke-width="0.9"/><path d="M186.4 354 L230 353.5 L280 354.5 L318.6 354.8 L322 360 L325.5 367 L321 371 L318 374.5 L280 374 L250 375.5 L220 374.8 L186.4 375.3 Z" fill="#ffffff"/><path d="M252 380 H321 V405.5 H252Z M252 405.5 H271 V416.5 H252Z M302 403 H321 V416.5 H302Z" fill="#ffffff"/><path d="M254 383 H268 V385.5 H254Z M254 387.5 H268 V390 H254Z M254 396.5 H269 V403 H254Z M255 407.5 H270 V413.5 H255Z M272 382.5 H301 V389 Q300 391.5 297 391.5 H276 Q272 391.5 272 389Z M272 396 H301 V403.5 H272Z M304 383 H319 V385.5 H304Z M304 387.5 H319 V390 H304Z M304 396 H319 V403 H304Z" fill="#003c87"/><path d="M271.5 405.5 H302 V416.5 H271.5Z" fill="#003c87"/><path d="M272 414 L276 418" stroke="#fff" stroke-width="1.2"/></svg><div class="t" style="left:4.6px;top:2.8px;font-size:9.2px;line-height:10px;color:#eef3fa;text-shadow:0 0 0.3px #fff">UV Editor</div>
</div>
<div class="a" style="left:488px;top:296px;width:455px;height:252px;background:#c3c3c3;overflow:hidden">
<svg style="position:absolute;left:0;top:0" width="455" height="252" viewBox="488 296 455 252"><defs><pattern id="tread" width="21" height="11" patternUnits="userSpaceOnUse" x="1" y="2">
<rect width="21" height="11" fill="#353836"/>
<rect x="1" y="0.5" width="7" height="5" fill="#5e605c" opacity="0.55"/><rect x="12" y="5" width="7" height="5" fill="#555854" opacity="0.5"/>
<path d="M0 2l5.25 5l5.25 -5l5.25 5l5.25 -5" stroke="#161818" stroke-width="1.5" fill="none"/>
<path d="M5.25 0V11M15.75 0V11" stroke="#1a1c1c" stroke-width="1"/>
</pattern>
<linearGradient id="tireedge" x1="0" y1="0" x2="1" y2="0">
<stop offset="0" stop-color="#0c0e0e" stop-opacity="0.9"/><stop offset="0.16" stop-color="#0c0e0e" stop-opacity="0.1"/><stop offset="0.84" stop-color="#0c0e0e" stop-opacity="0.1"/><stop offset="1" stop-color="#0c0e0e" stop-opacity="0.9"/></linearGradient>
<pattern id="tread2" width="10" height="10" patternUnits="userSpaceOnUse" patternTransform="rotate(20)">
<rect width="10" height="10" fill="#303230"/>
<rect x="1" y="1" width="4" height="3" fill="#585a56" opacity="0.6"/><rect x="6" y="6" width="3" height="3" fill="#4e504c" opacity="0.6"/>
<path d="M0 2l2.5 3l2.5 -3l2.5 3l2.5 -3" stroke="#141616" stroke-width="1.2" fill="none"/>
<path d="M0 7l2.5 2l2.5 -2l2.5 2l2.5 -2" stroke="#181a1a" stroke-width="0.9" fill="none"/>
</pattern>
<linearGradient id="hoodg" x1="0" y1="0" x2="1" y2="0.6"><stop offset="0" stop-color="#1d7258"/><stop offset="0.45" stop-color="#1f6a56"/><stop offset="1" stop-color="#2a7a66"/></linearGradient>
<linearGradient id="bumpg" x1="0" y1="0" x2="0" y2="1"><stop offset="0" stop-color="#6a3c2e"/><stop offset="0.5" stop-color="#4e2a1e"/><stop offset="1" stop-color="#2e160e"/></linearGradient>
<filter id="blur1" x="-20%" y="-20%" width="140%" height="140%"><feGaussianBlur stdDeviation="2.5"/></filter>
<filter id="noiseP" x="0" y="0" width="100%" height="100%"><feTurbulence type="fractalNoise" baseFrequency="0.05" numOctaves="3" seed="7"/><feColorMatrix values="0 0 0 0 0.04  0 0 0 0 0.22  0 0 0 0 0.17  0 0 0 2.2 -0.95"/><feComposite in2="SourceGraphic" operator="in"/></filter>
<filter id="noiseL" x="0" y="0" width="100%" height="100%"><feTurbulence type="fractalNoise" baseFrequency="0.1" numOctaves="2" seed="11"/><feColorMatrix values="0 0 0 0 0.3  0 0 0 0 0.62  0 0 0 0 0.52  0 0 0 2.2 -1.05"/><feComposite in2="SourceGraphic" operator="in"/></filter>
</defs><path d="M652.0 351.0 L686.0 316.0 L800.0 314.0 L822.0 337.0 L771.0 366.0 Z" fill="#c2c2c2"/><path d="M662.0 351.0 L692.0 336.0 L771.0 338.0 L771.0 366.0 Z" fill="#b4b4b4"/><path d="M698.0 335.0 L708.0 333.0 L726.0 333.0 L728.0 360.0 L698.0 357.0 Z" fill="#121212"/><path d="M728.0 333.0 L752.0 331.0 L771.0 338.0 L771.0 366.0 L728.0 358.0 Z" fill="#cacaca"/><path d="M748.0 331.0 L771.0 331.0 L771.0 340.0 L752.0 340.0 Z" fill="#3a8a7a" opacity="0.6"/><path d="M732.0 356.0 L742.0 349.0 L756.0 346.0 L770.0 350.0 L771.0 366.0 L736.0 362.0 Z" fill="#1a1614"/><path d="M754 345 Q754 327 764 327 Q774 328 773 345 L775 362 L767 356 Z" fill="#1a1212"/><ellipse cx="763.5" cy="338.5" rx="3.6" ry="5.8" fill="#c49c8c"/><path d="M737 353 Q745 349 752 351" stroke="#c09888" stroke-width="2.5" fill="none"/><path d="M782.0 330.0 L800.0 318.0 L818.0 338.0 L786.0 352.0 Z" fill="#c8c8c8"/><path d="M792.0 340.0 L812.0 333.0 L818.0 342.0 L795.0 356.0 Z" fill="#181818"/><path d="M704.5 346 L709 322.5 L780.6 325.4 L785.5 356.6" stroke="#6e6e6e" stroke-width="5" fill="none" stroke-linejoin="round"/><path d="M704.5 346 L709 322.5 L780.6 325.4 L785.5 356.6" stroke="#d6d6d4" stroke-width="3.4" fill="none" stroke-linejoin="round"/><path d="M683 316.5 Q690 308 720 306.8 L780 306.8 Q798 308 803 314 L801 317.5 L690 318.5 Z" fill="#449484"/><path d="M695 310 Q730 308 790 309.5" stroke="#62aa9a" stroke-width="1.5" fill="none" opacity="0.6"/><path d="M686 316 L652 351" stroke="#2e7666" stroke-width="2.8"/><path d="M699 317 L691 357" stroke="#2a6e5e" stroke-width="2"/><path d="M774 318 L771 367" stroke="#3e8e7e" stroke-width="4.5"/><path d="M788 318 L796 341" stroke="#3a8878" stroke-width="1.8"/><path d="M800 314 L815 337" stroke="#388676" stroke-width="3.5"/><path d="M815 369.7 L825 370.5 Q829.5 372 829.2 378 L829 405 Q828 418 820 420.1 L797 416.5 Q791 414 791 406 L792 392 Q795 376 815 369.7 Z" fill="#2c2e2e"/><clipPath id="rwc"><path d="M815 369.7 L824 371 L821 420 L797 416.5 Q791 414 791 406 L792 392 Q795 376 815 369.7 Z"/></clipPath><g clip-path="url(#rwc)"><g transform="rotate(8 808 395)"><path d="M788 364 l10 5 l10 -5 l10 5 l10 -5" stroke="#161818" stroke-width="1.4" fill="none"/><rect x="792" y="365.5" width="5" height="3.5" fill="#4e504e"/><rect x="811" y="367.5" width="5" height="3" fill="#4a4c4a"/><path d="M788 372 l10 5 l10 -5 l10 5 l10 -5" stroke="#161818" stroke-width="1.4" fill="none"/><rect x="792" y="373.5" width="5" height="3.5" fill="#4e504e"/><rect x="811" y="375.5" width="5" height="3" fill="#4a4c4a"/><path d="M788 380 l10 5 l10 -5 l10 5 l10 -5" stroke="#161818" stroke-width="1.4" fill="none"/><rect x="792" y="381.5" width="5" height="3.5" fill="#4e504e"/><rect x="811" y="383.5" width="5" height="3" fill="#4a4c4a"/><path d="M788 388 l10 5 l10 -5 l10 5 l10 -5" stroke="#161818" stroke-width="1.4" fill="none"/><rect x="792" y="389.5" width="5" height="3.5" fill="#4e504e"/><rect x="811" y="391.5" width="5" height="3" fill="#4a4c4a"/><path d="M788 396 l10 5 l10 -5 l10 5 l10 -5" stroke="#161818" stroke-width="1.4" fill="none"/><rect x="792" y="397.5" width="5" height="3.5" fill="#4e504e"/><rect x="811" y="399.5" width="5" height="3" fill="#4a4c4a"/><path d="M788 404 l10 5 l10 -5 l10 5 l10 -5" stroke="#161818" stroke-width="1.4" fill="none"/><rect x="792" y="405.5" width="5" height="3.5" fill="#4e504e"/><rect x="811" y="407.5" width="5" height="3" fill="#4a4c4a"/><path d="M788 412 l10 5 l10 -5 l10 5 l10 -5" stroke="#161818" stroke-width="1.4" fill="none"/><rect x="792" y="413.5" width="5" height="3.5" fill="#4e504e"/><rect x="811" y="415.5" width="5" height="3" fill="#4a4c4a"/><path d="M788 420 l10 5 l10 -5 l10 5 l10 -5" stroke="#161818" stroke-width="1.4" fill="none"/><rect x="792" y="421.5" width="5" height="3.5" fill="#4e504e"/><rect x="811" y="423.5" width="5" height="3" fill="#4a4c4a"/><path d="M808 360 V430" stroke="#141616" stroke-width="1.2"/></g></g><path d="M824 371 Q829.5 372 829.2 378 L829 405 Q828 418 820 420.1 Q824 400 824 371 Z" fill="#141616"/><path d="M815 369.7 L825 370.5 Q829.5 372 829.2 378 L829 405 Q828 418 820 420.1 L797 416.5 Q791 414 791 406 L792 392 Q795 376 815 369.7 Z" fill="none" stroke="#121414" stroke-width="1.2"/><path d="M527.5 407.0 L553.0 392.0 L597.0 372.0 L642.0 354.0 L652.0 349.0 L700.0 352.0 L771.0 366.0 L821.0 338.0 L824.0 342.0 L823.0 357.0 L816.0 366.0 L798.0 377.0 L780.0 392.0 L762.0 412.0 L760.0 426.0 L750.0 432.0 L736.0 441.0 L718.0 462.0 L703.0 486.0 L697.0 494.0 L692.0 494.0 L690.0 470.0 L684.0 456.0 L660.0 446.0 L600.0 432.0 L560.0 420.0 L530.0 412.0 Z" fill="url(#hoodg)"/><path d="M700.0 438.0 L740.0 400.0 L771.0 366.0 L821.0 338.0 L824.0 342.0 L823.0 357.0 L816.0 366.0 L798.0 377.0 L780.0 392.0 L762.0 412.0 L760.0 426.0 L750.0 432.0 L736.0 441.0 L718.0 462.0 L703.0 486.0 L697.0 494.0 L692.0 494.0 L690.0 470.0 Z" fill="#287866" opacity="0.85"/><g filter="url(#blur1)" opacity="0.55"><path d="M560 400 Q610 378 660 366 Q700 360 740 364" stroke="#2f9274" stroke-width="8" fill="none"/><path d="M585 414 Q630 400 690 384" stroke="#0e4436" stroke-width="6" fill="none"/><path d="M640 432 Q690 414 735 388" stroke="#3a9a80" stroke-width="7" fill="none"/><path d="M705 440 Q725 418 752 394" stroke="#0e4438" stroke-width="5" fill="none"/><path d="M770 370 Q790 362 815 350" stroke="#3a9080" stroke-width="5" fill="none"/><ellipse cx="640" cy="395" rx="20" ry="8" fill="#154e40"/><ellipse cx="600" cy="405" rx="14" ry="5" fill="#174a3e"/><ellipse cx="560" cy="412" rx="10" ry="4" fill="#1a5244"/><ellipse cx="715" cy="425" rx="14" ry="30" fill="#3a9484" transform="rotate(35 715 425)"/><ellipse cx="805" cy="352" rx="8" ry="14" fill="#3e9484" transform="rotate(50 805 352)"/></g><path d="M527.5 407.0 L553.0 392.0 L597.0 372.0 L642.0 354.0 L652.0 349.0 L700.0 352.0 L771.0 366.0 L821.0 338.0 L824.0 342.0 L823.0 357.0 L816.0 366.0 L798.0 377.0 L780.0 392.0 L762.0 412.0 L760.0 426.0 L750.0 432.0 L736.0 441.0 L718.0 462.0 L703.0 486.0 L697.0 494.0 L692.0 494.0 L690.0 470.0 L684.0 456.0 L660.0 446.0 L600.0 432.0 L560.0 420.0 L530.0 412.0 Z" fill="#000" filter="url(#noiseP)" opacity="0.35"/><path d="M527.5 407.0 L553.0 392.0 L597.0 372.0 L642.0 354.0 L652.0 349.0 L700.0 352.0 L771.0 366.0 L821.0 338.0 L824.0 342.0 L823.0 357.0 L816.0 366.0 L798.0 377.0 L780.0 392.0 L762.0 412.0 L760.0 426.0 L750.0 432.0 L736.0 441.0 L718.0 462.0 L703.0 486.0 L697.0 494.0 L692.0 494.0 L690.0 470.0 L684.0 456.0 L660.0 446.0 L600.0 432.0 L560.0 420.0 L530.0 412.0 Z" fill="#000" filter="url(#noiseL)" opacity="0.06"/><path d="M528 409 L600 431 L660 445 L699 435" stroke="#2e8c70" stroke-width="1.6" fill="none"/><path d="M524.5 412.0 L530.0 413.0 L560.0 421.0 L600.0 433.0 L660.0 446.0 L699.0 436.0 L707.0 470.0 L704.0 490.0 L690.0 496.0 L655.0 488.0 L600.0 468.0 L555.0 452.0 L531.0 440.0 Z" fill="#1c4e44"/><path d="M530.0 413.0 L560.0 421.0 L600.0 433.0 L660.0 446.0 L699.0 436.0 L700.0 444.0 L660.0 452.0 L600.0 439.0 L560.0 427.0 L531.0 419.0 Z" fill="#123a30" opacity="0.8"/><path d="M552.0 423.0 L628.0 446.0 L628.0 464.0 L552.0 440.0 Z" fill="#141614"/><path d="M555 428 L626 451 M555 433 L626 456 M555 438 L626 461" stroke="#2a2c2a" stroke-width="0.7"/><path d="M548.0 446.0 L628.0 468.0 L650.0 476.0 L690.0 488.0 L690.0 494.0 L650.0 483.0 L600.0 470.0 L548.0 452.0 Z" fill="#2e7868"/><path d="M524.5 411 L530 434 L552 443 M524.5 411 L546 418" stroke="#121212" stroke-width="2.2" fill="none"/><path d="M652.5 449.7 L682 456 L683 483 L652.5 478 Z" stroke="#1a120e" stroke-width="2" fill="none"/><ellipse cx="542.5" cy="425.5" rx="8" ry="9.5" fill="#121212"/><ellipse cx="543.5" cy="425.5" rx="5.3" ry="7" fill="#cdd2ce"/><ellipse cx="665.8" cy="463" rx="9" ry="10.5" fill="#121212"/><ellipse cx="667" cy="463" rx="6.3" ry="7.8" fill="#d4d8d4"/><ellipse cx="560.5" cy="433.3" rx="3.3" ry="3" fill="#d8662a"/><ellipse cx="634.7" cy="456" rx="4" ry="2.8" fill="#e87030"/><path d="M688.4 457.5 L694.7 459 L694.7 473 L688.4 471 Z" fill="#101010"/><path d="M519.0 437.0 L567.0 450.5 L687.0 487.0 L689.0 499.0 L682.0 507.0 L567.0 465.0 L516.0 449.0 L514.0 442.0 Z" fill="url(#bumpg)"/><path d="M517 441 L567 454.5 L686 491" stroke="#8a5a48" stroke-width="2.4" opacity="0.55" fill="none"/><path d="M600 470 L640 482 M540 452 L560 458" stroke="#2a140c" stroke-width="2" opacity="0.5"/><path d="M663.4 481 L679.8 484 L679 490.3 L663 487.5 Z" fill="#ececec"/><path d="M736 441 Q740 428 752 421 Q760 420 762 426 L750 436 Z" fill="#0a1412"/><path d="M739 441 Q755 432 771 434 Q781 438 781 468 Q780 505 768 522 Q758 531 748 529 L712 518 Q703 512 703 492 Q704 470 716 456 Z" fill="#2a2c2c"/><clipPath id="fwc"><path d="M739 441 Q755 432 771 434 Q764 460 758 490 Q752 515 748 529 L712 518 Q703 512 703 492 Q704 470 716 456 Z"/></clipPath><g clip-path="url(#fwc)"><g transform="rotate(18 740 482)"><path d="M712 420 l14 7 l14 -7 l14 7 l14 -7" stroke="#151717" stroke-width="1.8" fill="none"/><rect x="716" y="422" width="8" height="5" fill="#4a4c4a"/><rect x="742" y="425" width="8" height="4" fill="#454745"/><rect x="729" y="428" width="6" height="3" fill="#404240"/><path d="M712 431 l14 7 l14 -7 l14 7 l14 -7" stroke="#151717" stroke-width="1.8" fill="none"/><rect x="716" y="433" width="8" height="5" fill="#4a4c4a"/><rect x="742" y="436" width="8" height="4" fill="#454745"/><rect x="729" y="439" width="6" height="3" fill="#404240"/><path d="M712 442 l14 7 l14 -7 l14 7 l14 -7" stroke="#151717" stroke-width="1.8" fill="none"/><rect x="716" y="444" width="8" height="5" fill="#4a4c4a"/><rect x="742" y="447" width="8" height="4" fill="#454745"/><rect x="729" y="450" width="6" height="3" fill="#404240"/><path d="M712 453 l14 7 l14 -7 l14 7 l14 -7" stroke="#151717" stroke-width="1.8" fill="none"/><rect x="716" y="455" width="8" height="5" fill="#4a4c4a"/><rect x="742" y="458" width="8" height="4" fill="#454745"/><rect x="729" y="461" width="6" height="3" fill="#404240"/><path d="M712 464 l14 7 l14 -7 l14 7 l14 -7" stroke="#151717" stroke-width="1.8" fill="none"/><rect x="716" y="466" width="8" height="5" fill="#4a4c4a"/><rect x="742" y="469" width="8" height="4" fill="#454745"/><rect x="729" y="472" width="6" height="3" fill="#404240"/><path d="M712 475 l14 7 l14 -7 l14 7 l14 -7" stroke="#151717" stroke-width="1.8" fill="none"/><rect x="716" y="477" width="8" height="5" fill="#4a4c4a"/><rect x="742" y="480" width="8" height="4" fill="#454745"/><rect x="729" y="483" width="6" height="3" fill="#404240"/><path d="M712 486 l14 7 l14 -7 l14 7 l14 -7" stroke="#151717" stroke-width="1.8" fill="none"/><rect x="716" y="488" width="8" height="5" fill="#4a4c4a"/><rect x="742" y="491" width="8" height="4" fill="#454745"/><rect x="729" y="494" width="6" height="3" fill="#404240"/><path d="M712 497 l14 7 l14 -7 l14 7 l14 -7" stroke="#151717" stroke-width="1.8" fill="none"/><rect x="716" y="499" width="8" height="5" fill="#4a4c4a"/><rect x="742" y="502" width="8" height="4" fill="#454745"/><rect x="729" y="505" width="6" height="3" fill="#404240"/><path d="M712 508 l14 7 l14 -7 l14 7 l14 -7" stroke="#151717" stroke-width="1.8" fill="none"/><rect x="716" y="510" width="8" height="5" fill="#4a4c4a"/><rect x="742" y="513" width="8" height="4" fill="#454745"/><rect x="729" y="516" width="6" height="3" fill="#404240"/><path d="M712 519 l14 7 l14 -7 l14 7 l14 -7" stroke="#151717" stroke-width="1.8" fill="none"/><rect x="716" y="521" width="8" height="5" fill="#4a4c4a"/><rect x="742" y="524" width="8" height="4" fill="#454745"/><rect x="729" y="527" width="6" height="3" fill="#404240"/><path d="M712 530 l14 7 l14 -7 l14 7 l14 -7" stroke="#151717" stroke-width="1.8" fill="none"/><rect x="716" y="532" width="8" height="5" fill="#4a4c4a"/><rect x="742" y="535" width="8" height="4" fill="#454745"/><rect x="729" y="538" width="6" height="3" fill="#404240"/><path d="M712 541 l14 7 l14 -7 l14 7 l14 -7" stroke="#151717" stroke-width="1.8" fill="none"/><rect x="716" y="543" width="8" height="5" fill="#4a4c4a"/><rect x="742" y="546" width="8" height="4" fill="#454745"/><rect x="729" y="549" width="6" height="3" fill="#404240"/><path d="M740 410 V560 M726 410 V560 M754 410 V560" stroke="#181a1a" stroke-width="1.3"/></g></g><path d="M771 434 Q781 438 781 468 Q780 505 768 522 Q758 531 748 529 Q753 510 758 490 Q764 460 771 434 Z" fill="#1a1c1c"/><ellipse cx="768.5" cy="482" rx="6.5" ry="24" fill="#070909" transform="rotate(10 768.5 482)"/><path d="M739 441 Q755 432 771 434 Q781 438 781 468 Q780 505 768 522 Q758 531 748 529 L712 518 Q703 512 703 492 Q704 470 716 456 Z" fill="none" stroke="#121414" stroke-width="1.4"/><path d="M509 528.4 V512.6" stroke="#70c870" stroke-width="1"/><path d="M509 528.4 H516" stroke="#d07070" stroke-width="0.8"/><path d="M509 528.4 L503 532" stroke="#6060c0" stroke-width="0.9"/><path d="M518.5 526.5 L523.5 532.5 M523.5 526.5 L518.5 532.5" stroke="#d07070" stroke-width="0.9"/><path d="M500 529.5 H506 L500 535.5 H506" stroke="#5a5ac0" stroke-width="1" fill="none"/><rect x="488" y="546" width="455" height="2" fill="#d6d6d6"/></svg><div class="t" style="left:5.2px;top:1.6px;letter-spacing:0.25px;font-size:9.3px;line-height:10px;color:#f2f2f2;text-shadow:0.9px 0.5px 0.2px #4a4a4a">Perspective</div>
</div>
<div class="a" style="left:488px;top:296px;width:455px;height:1px;background:#9a9a9a;"></div>
<div class="a" style="left:488px;top:297px;width:455px;height:1px;background:#b2b2b2;"></div>
<div class="a" style="left:488px;top:296px;width:1px;height:252px;background:#929292;"></div>
<div class="a" style="left:489px;top:297px;width:1px;height:251px;background:#acacac;"></div>
<div class="a" style="left:943px;top:35px;width:81px;height:513px;background:#f0f0f0;"></div>
<div class="a" style="left:943px;top:35px;width:2px;height:513px;background:#f4f4f4;"></div>
<div class="a" style="left:946px;top:39px;width:70px;height:1px;background:#c8c8c8;"></div>
<div class="a" style="left:946px;top:41px;width:70px;height:1px;background:#c8c8c8;"></div>
<div class="t" style="left:1016.5px;top:35.6px;font-size:6px;line-height:6.90px;color:#222;font-weight:bold">&#x2715;</div>
<div class="a" style="left:946px;top:44px;width:77px;height:246px;background:#ffffff;border-top:1px solid #a0a0a0;border-left:1px solid #a0a0a0;border-right:1px solid #e8e8e8;border-bottom:1px solid #e8e8e8"></div>
<svg class="a" style="left:946px;top:44px;" width="77" height="50" viewBox="0 0 77 50"><path d="M7.5 7v28.5M7.5 6.5h5M9 16.2h3.5M9 25.6h3.5M9 35h3.5" stroke="#bbb" stroke-width="0.6" stroke-dasharray="0.8 0.6"/><rect x="5.5" y="14.2" width="4" height="4" stroke="#aaa" stroke-width="0.5" fill="#fff"/><path d="M6.3 16.2h2.4M7.5 15v2.4" stroke="#999" stroke-width="0.5"/><rect x="5.5" y="23.6" width="4" height="4" stroke="#aaa" stroke-width="0.5" fill="#fff"/><path d="M6.3 25.6h2.4M7.5 24.4v2.4" stroke="#999" stroke-width="0.5"/><rect x="5.5" y="33" width="4" height="4" stroke="#aaa" stroke-width="0.5" fill="#fff"/><path d="M6.3 35h2.4M7.5 33.8v2.4" stroke="#999" stroke-width="0.5"/><path d="M16 3.8l-2.8 2.8l2.8 2.8l2.8 -2.8z" stroke="#333" stroke-width="0.8" fill="none"/><path d="M16 4v5.2l2.6 -2.6z" fill="#333"/><ellipse cx="16" cy="13.8" rx="2.4" ry="1" stroke="#333" stroke-width="0.7" fill="none"/><path d="M13.6 13.8v3.8q2.4 1.8 4.8 0v-3.8" stroke="#333" stroke-width="0.8" fill="none"/><circle cx="16" cy="25.6" r="2.6" stroke="#333" stroke-width="0.8" fill="none"/><path d="M16 23v5.2a2.6 2.6 0 0 0 0 -5.2z" fill="#222"/><rect x="13.5" y="33" width="4" height="4.5" stroke="#333" stroke-width="0.7" fill="none"/><path d="M14.5 33v-1h4v4.5h-1" stroke="#333" stroke-width="0.7" fill="none"/></svg>
<div class="t" style="left:969.8px;top:46.2px;font-size:7px;line-height:8.05px;color:#333;transform:scaleX(0.9);transform-origin:0 0;">Lights</div>
<div class="t" style="left:969.8px;top:55.7px;font-size:7px;line-height:8.05px;color:#333;transform:scaleX(0.9);transform-origin:0 0;">Groups</div>
<div class="t" style="left:969.8px;top:65.1px;font-size:7px;line-height:8.05px;color:#333;transform:scaleX(0.9);transform-origin:0 0;">Materials</div>
<div class="t" style="left:969.8px;top:74.5px;font-size:7px;line-height:8.05px;color:#333;transform:scaleX(0.9);transform-origin:0 0;">Bones</div>
<div class="a" style="left:946px;top:296px;width:70px;height:1px;background:#c8c8c8;"></div>
<div class="a" style="left:946px;top:298px;width:70px;height:1px;background:#c8c8c8;"></div>
<div class="t" style="left:1016.5px;top:292.6px;font-size:6px;line-height:6.90px;color:#222;font-weight:bold">&#x2715;</div>
<div class="a" style="left:947px;top:301px;width:76px;height:10.5px;background:#f2f2f2;border:1px solid #c4c4c4"></div>
<div class="t" style="left:947px;top:301.8px;width:76px;text-align:center;font-size:6.5px;line-height:9.5px;color:#333"><span style="display:inline-block;transform:scaleX(0.9)">3D States</span></div>
<div class="a" style="left:947.0px;top:312.0px;width:25.5px;height:10.8px;background:#e1e1e1;border:1px solid #d0d0d0"></div>
<div class="t" style="left:947.0px;top:312.8px;width:25.5px;text-align:center;font-size:6.2px;line-height:9.8px;color:#333"><span style="display:inline-block;transform:scaleX(0.82)">BEdge</span></div>
<div class="a" style="left:972.5px;top:312.0px;width:25.5px;height:10.8px;background:#e1e1e1;border:1px solid #d0d0d0"></div>
<div class="t" style="left:972.5px;top:312.8px;width:25.5px;text-align:center;font-size:6.2px;line-height:9.8px;color:#333"><span style="display:inline-block;transform:scaleX(0.82)">Vtx Clr</span></div>
<div class="a" style="left:998.0px;top:312.0px;width:25.5px;height:10.8px;background:#e1e1e1;border:1px solid #d0d0d0"></div>
<div class="t" style="left:998.0px;top:312.8px;width:25.5px;text-align:center;font-size:6.2px;line-height:9.8px;color:#333"><span style="display:inline-block;transform:scaleX(0.82)">Bne Clr</span></div>
<div class="a" style="left:947.0px;top:322.8px;width:25.5px;height:10.8px;background:#e1e1e1;border:1px solid #d0d0d0"></div>
<div class="t" style="left:947.0px;top:323.6px;width:25.5px;text-align:center;font-size:6.2px;line-height:9.8px;color:#333"><span style="display:inline-block;transform:scaleX(0.82)">Tex Sm</span></div>
<div class="a" style="left:972.5px;top:322.8px;width:25.5px;height:10.8px;background:#e1e1e1;border:1px solid #d0d0d0"></div>
<div class="t" style="left:972.5px;top:323.6px;width:25.5px;text-align:center;font-size:6.2px;line-height:9.8px;color:#333"><span style="display:inline-block;transform:scaleX(0.82)">TxSmWh</span></div>
<div class="a" style="left:998.0px;top:322.8px;width:25.5px;height:10.8px;background:#e1e1e1;border:1px solid #d0d0d0"></div>
<div class="t" style="left:998.0px;top:323.6px;width:25.5px;text-align:center;font-size:6.2px;line-height:9.8px;color:#333"><span style="display:inline-block;transform:scaleX(0.82)">Wirefrme</span></div>
<div class="a" style="left:947.0px;top:333.6px;width:25.5px;height:10.8px;background:#e1e1e1;border:1px solid #d0d0d0"></div>
<div class="t" style="left:947.0px;top:334.40000000000003px;width:25.5px;text-align:center;font-size:6.2px;line-height:9.8px;color:#333"><span style="display:inline-block;transform:scaleX(0.82)">Skel</span></div>
<div class="a" style="left:972.5px;top:333.6px;width:25.5px;height:10.8px;background:#e1e1e1;border:1px solid #d0d0d0"></div>
<div class="t" style="left:972.5px;top:334.40000000000003px;width:25.5px;text-align:center;font-size:6.2px;line-height:9.8px;color:#333"><span style="display:inline-block;transform:scaleX(0.82)">Sd Bkf</span></div>
<div class="a" style="left:998.0px;top:333.6px;width:25.5px;height:10.8px;background:#e1e1e1;border:1px solid #d0d0d0"></div>
<div class="t" style="left:998.0px;top:334.40000000000003px;width:25.5px;text-align:center;font-size:6.2px;line-height:9.8px;color:#333"><span style="display:inline-block;transform:scaleX(0.82)">Inc Bkf</span></div>
<div class="a" style="left:947.0px;top:344.4px;width:25.5px;height:10.8px;background:#e1e1e1;border:1px solid #d0d0d0"></div>
<div class="t" style="left:947.0px;top:345.2px;width:25.5px;text-align:center;font-size:6.2px;line-height:9.8px;color:#333"><span style="display:inline-block;transform:scaleX(0.82)">Outline</span></div>
<div class="a" style="left:972.5px;top:344.4px;width:25.5px;height:10.8px;background:#e1e1e1;border:1px solid #d0d0d0"></div>
<div class="t" style="left:972.5px;top:345.2px;width:25.5px;text-align:center;font-size:6.2px;line-height:9.8px;color:#333"><span style="display:inline-block;transform:scaleX(0.82)">BBox</span></div>
<div class="a" style="left:998.0px;top:344.4px;width:25.5px;height:10.8px;background:#e1e1e1;border:1px solid #d0d0d0"></div>
<div class="t" style="left:998.0px;top:345.2px;width:25.5px;text-align:center;font-size:6.2px;line-height:9.8px;color:#333"><span style="display:inline-block;transform:scaleX(0.82)">BSphr</span></div>
<div class="a" style="left:947.0px;top:355.2px;width:25.5px;height:10.8px;background:#e1e1e1;border:1px solid #d0d0d0"></div>
<div class="t" style="left:947.0px;top:356.0px;width:25.5px;text-align:center;font-size:6.2px;line-height:9.8px;color:#333"><span style="display:inline-block;transform:scaleX(0.82)">Grid</span></div>
<div class="a" style="left:972.5px;top:355.2px;width:25.5px;height:10.8px;background:#e1e1e1;border:1px solid #d0d0d0"></div>
<div class="t" style="left:972.5px;top:356.0px;width:25.5px;text-align:center;font-size:6.2px;line-height:9.8px;color:#333"><span style="display:inline-block;transform:scaleX(0.82)">FNrml</span></div>
<div class="a" style="left:998.0px;top:355.2px;width:25.5px;height:10.8px;background:#e1e1e1;border:1px solid #d0d0d0"></div>
<div class="t" style="left:998.0px;top:356.0px;width:25.5px;text-align:center;font-size:6.2px;line-height:9.8px;color:#333"><span style="display:inline-block;transform:scaleX(0.82)">VNrml</span></div>
<div class="a" style="left:0px;top:548px;width:1024px;height:16px;background:#f0f0f0;"></div>
<div class="a" style="left:0px;top:548px;width:943px;height:1px;background:#fafafa;"></div>
<div class="t" style="left:2.2px;top:550.2px;font-size:5px;line-height:5.75px;color:#222;font-weight:bold">&#x2715;</div>
<div class="a" style="left:2px;top:558px;width:2px;height:4px;background:#d0d0d0;"></div>
<div class="a" style="left:8.5px;top:551px;width:31.5px;height:12px;background:#fff;border:1px solid #a8a8a8;border-right-color:#e0e0e0;border-bottom-color:#e0e0e0"></div>
<div class="t" style="left:10.1px;top:552.8px;font-size:7.2px;line-height:8.28px;color:#444;transform:scaleX(0.85);transform-origin:0 0;">0.00000</div>
<div class="a" style="left:40px;top:551px;width:31.5px;height:12px;background:#fff;border:1px solid #a8a8a8;border-right-color:#e0e0e0;border-bottom-color:#e0e0e0"></div>
<div class="t" style="left:41.6px;top:552.8px;font-size:7.2px;line-height:8.28px;color:#444;transform:scaleX(0.85);transform-origin:0 0;">0.00000</div>
<div class="a" style="left:0px;top:564px;width:1024px;height:1px;background:#dadada;"></div>
<div class="a" style="left:0px;top:565px;width:1024px;height:11px;background:#f0f0f0;"></div>
<div class="t" style="left:1px;top:567.2px;font-size:7px;line-height:8.05px;color:#222;transform:scaleX(0.93);transform-origin:0 0;">Drag to rotate, shift to zoom, ctrl to move, right-click for more options.</div>
<div class="t" style="left:901.8px;top:567.4px;font-size:7px;line-height:8.05px;color:#333;transform:scaleX(0.9);transform-origin:0 0;">38 MB</div>
<div class="t" style="left:934px;top:567.4px;font-size:7px;line-height:8.05px;color:#333;transform:scaleX(0.87);transform-origin:0 0;">Verts: 21318</div>
<div class="t" style="left:979.9px;top:567.4px;font-size:7px;line-height:8.05px;color:#333;transform:scaleX(0.87);transform-origin:0 0;">Polys: 31011</div>
<div class="a" style="left:928.5px;top:566px;width:1px;height:10px;background:#e4e4e4;"></div>
<div class="a" style="left:975.6px;top:566px;width:1px;height:10px;background:#e4e4e4;"></div>
</body></html>
